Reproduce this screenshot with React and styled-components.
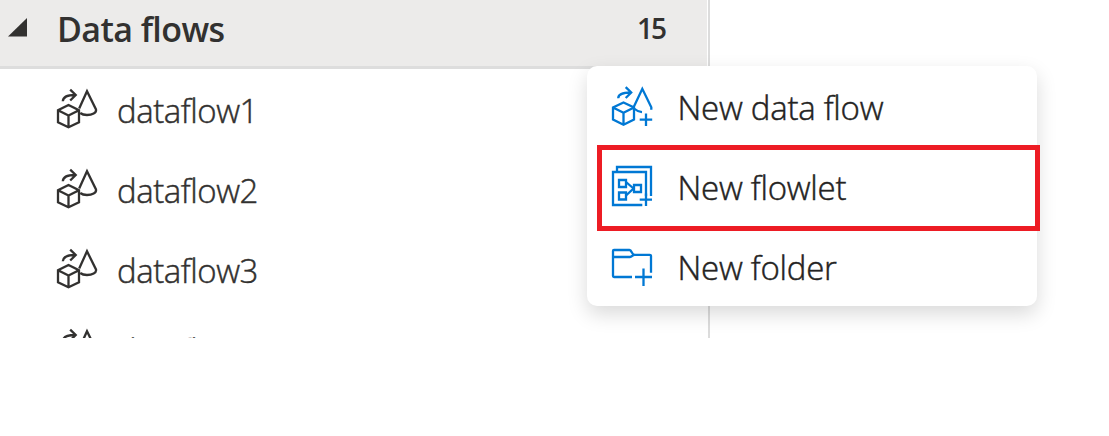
import React from "react";
import styled, { createGlobalStyle } from "styled-components";

const GlobalStyle = createGlobalStyle`
  * { box-sizing: border-box; }
  body {
    margin: 0;
    background: #fff;
    color: #242322;
    font-family: "Segoe UI", "Open Sans", "Noto Sans", sans-serif;
    overflow: hidden;
  }
`;

const Page = styled.main`
  position: relative;
  width: 1109px;
  height: 436px;
  overflow: hidden;
`;

const Panel = styled.section`
  width: 710px;
  height: 338px;
  padding-right: 1px;
  border-right: 2px solid #dcdcdc;
  overflow: hidden;
`;

const Header = styled.header`
  display: flex;
  align-items: center;
  height: 69px;
  padding: 0 42px 10px 8px;
  background: #ecebea;
  border-bottom: 3px solid #dddddd;
`;

const Caret = styled.svg`
  width: 20px;
  height: 20px;
  margin-right: 29px;
  margin-top: -3px;
  flex: none;
`;

const Title = styled.h2`
  margin: 0;
  flex: 1;
  font-size: 34px;
  font-weight: 600;
  line-height: 56px;
  letter-spacing: -0.6px;
  padding-top: 1px;
  color: #323130;
`;

const Count = styled.span`
  font-size: 28px;
  font-weight: 600;
  line-height: 56px;
  letter-spacing: -2px;
  color: #323130;
`;

const List = styled.ul`
  margin: 0;
  padding: 0;
  list-style: none;
`;

const FlowRow = styled.li`
  display: flex;
  align-items: center;
  height: 80px;
  padding-left: 55px;
  gap: 18px;
  color: #323130;
`;

const Label = styled.span`
  padding-top: 3px;
  font-size: 33px;
  font-weight: 300;
  -webkit-text-stroke: 0.45px currentColor;
  line-height: 60px;
  letter-spacing: ${(p) => p.$spacing || 0}px;
  white-space: nowrap;
`;

const Menu = styled.ul`
  position: absolute;
  left: 587px;
  top: 66px;
  width: 450px;
  margin: 0;
  padding: 0;
  list-style: none;
  background: #fff;
  border-radius: 10px;
  box-shadow: 0 8px 20px rgba(0, 0, 0, 0.15);
`;

const MenuItem = styled.li`
  display: flex;
  align-items: center;
  height: 80px;
  padding-left: 23px;
  gap: 23.5px;
`;

const Highlight = styled.div`
  position: absolute;
  left: 597px;
  top: 145px;
  width: 443px;
  height: 86px;
  border: 5px solid #ed1c24;
`;

const Icon = styled.svg`
  width: 44px;
  height: 44px;
  flex: none;
  fill: none;
  stroke: ${(p) => p.$color || "#323130"};
  stroke-width: 2.3;
`;

const DataFlowIcon = () => (
  <Icon viewBox="5 7 44 44">
    <path d="M12.8 21.3C13 16.5 18 15 25 15M20.2 9.7L25.7 15L20.2 20.5" />
    <path d="M18.5 25L29 30.2V42.2L18.5 47.3L8 42.2V30.2ZM8 30.2L18.5 35.5L29 30.2M18.5 35.5V47.3" />
    <path d="M29.2 28.5L37 11.3L46 29.5C46.8 33 42 35 37 35C33.8 35 31.7 34.2 30.2 33" />
  </Icon>
);

const NewDataFlowIcon = () => (
  <Icon viewBox="10 4 44 44" $color="#0078d4">
    <path d="M18.2 18.2C18.4 14 23 12.5 30.5 12.5M25.7 7.2L31.2 12.5L25.7 18" />
    <path d="M23.5 22.5L34 27.5V39.5L23.5 44.8L13 39.5V27.5ZM13 27.5L23.5 32.8L34 27.5M23.5 32.8V44.8" />
    <path d="M33.5 27.5L42.3 8.8L51.3 27.3V29.8M34 28.5C36.5 30.7 39 31.9 42 32.1" />
    <path d="M46 33.5V46M39.7 39.7H52.2" />
  </Icon>
);

const NewFlowletIcon = () => (
  <Icon viewBox="10 4 44 44" $color="#0078d4">
    <path d="M17 11.5V7H51V36M42.3 45H13V12H46V36" />
    <path d="M19 20H26V27H19ZM19 32.5H26V39.5H19ZM34 25H41V32H34Z" />
    <path d="M26 22L33.5 28.5L26 35.5" />
    <path d="M46 33.5V46M39.7 39.7H52" />
  </Icon>
);

const NewFolderIcon = () => (
  <Icon viewBox="10 9 44 44" $color="#0078d4">
    <path d="M32 42H14Q13 42 13 41V16Q13 15 14 15H29.5C32 15 31.5 19.8 34.5 19.8H49.8Q51 19.8 51 21V37.8" />
    <path d="M13 22H30C32 22 32.5 19.8 34.5 19.8" />
    <path d="M43.5 33.5V51M35 42H52" />
  </Icon>
);

const flows = ["dataflow1", "dataflow2", "dataflow3", "dataflow4"];

const actions = [
  { label: "New data flow", Glyph: NewDataFlowIcon },
  { label: "New flowlet", Glyph: NewFlowletIcon },
  { label: "New folder", Glyph: NewFolderIcon },
];

export default function App() {
  return (
    <Page>
      <GlobalStyle />
      <Panel>
        <Header>
          <Caret viewBox="0 0 20 20">
            <path d="M0 19.5L19 1V19.5Z" fill="#323130" />
          </Caret>
          <Title>Data flows</Title>
          <Count>15</Count>
        </Header>
        <List>
          {flows.map((name) => (
            <FlowRow key={name}>
              <DataFlowIcon />
              <Label $spacing={-0.45}>{name}</Label>
            </FlowRow>
          ))}
        </List>
      </Panel>
      <Menu>
        {actions.map(({ label, Glyph }) => (
          <MenuItem key={label}>
            <Glyph />
            <Label $spacing={-0.26}>{label}</Label>
          </MenuItem>
        ))}
      </Menu>
      <Highlight />
    </Page>
  );
}
